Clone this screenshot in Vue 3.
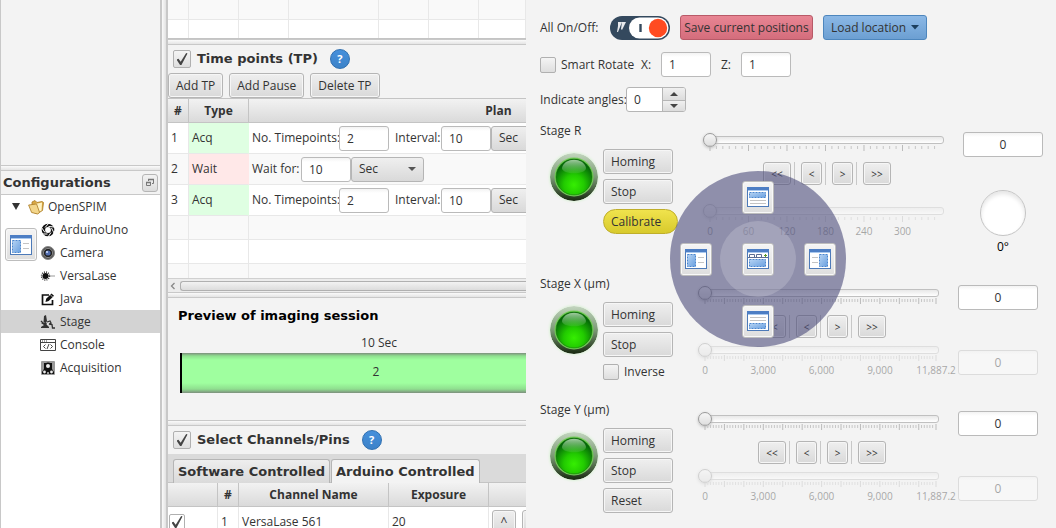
<script setup>
import { ref } from 'vue'

const devices = [
  { name: 'ArduinoUno', icon: 'aperture' },
  { name: 'Camera', icon: 'camera' },
  { name: 'VersaLase', icon: 'laser' },
  { name: 'Java', icon: 'edit' },
  { name: 'Stage', icon: 'stage' },
  { name: 'Console', icon: 'console' },
  { name: 'Acquisition', icon: 'acquisition' },
]
const selected = ref('Stage')

const timePoints = [
  { id: 1, type: 'Acq', count: 2, interval: 10 },
  { id: 2, type: 'Wait', wait: 10 },
  { id: 3, type: 'Acq', count: 2, interval: 10 },
]

const linear = {
  max: 11887.2,
  major: 1000,
  minor: 1000 / 7,
  labels: [[0, '0'], [3000, '3,000'], [6000, '6,000'], [9000, '9,000'], [11887.2, '11,887.2']],
}
const rotary = {
  max: 360,
  major: 60,
  minor: 10,
  labels: [[0, '0'], [60, '60'], [120, '120'], [180, '180'], [240, '240'], [300, '300']],
}
const stages = [
  { id: 'r', title: 'Stage R', third: 'calibrate', scale: rotary, dial: true },
  { id: 'x', title: 'Stage X (µm)', third: 'inverse', scale: linear, dial: false },
  { id: 'y', title: 'Stage Y (µm)', third: 'reset', scale: linear, dial: false },
]
const steps = ['<<', '<', '>', '>>']

function percent(value, scale) {
  return (value / scale.max) * 100 + '%'
}
function ticks(scale) {
  const perMajor = Math.round(scale.major / scale.minor)
  const list = []
  for (let i = 0; i * scale.minor <= scale.max - scale.minor / 2; i++) {
    list.push({ x: percent(i * scale.minor, scale), major: i % perMajor === 0 })
  }
  if (scale.max % scale.major) list.push({ x: '100%', major: true })
  return list
}

const docks = ['top', 'left', 'center', 'right', 'bottom']
const dockArea = {
  top: [3, 5, 16, 5],
  left: [3, 5, 8, 12],
  center: [3, 10, 16, 7],
  right: [11, 5, 8, 12],
  bottom: [3, 12, 16, 5],
}
const dockLines = {
  top: [[3, 13, 16], [3, 16, 16]],
  left: [[13, 8, 6], [13, 13, 6]],
  center: [],
  right: [[3, 8, 6], [3, 13, 6]],
  bottom: [[3, 6, 16], [3, 9, 16]],
}
</script>

<template>
  <div class="app">
    <aside class="sidebar">
      <div class="blank"></div>
      <div class="splitter"></div>
      <header class="side-head">
        <h2>Configurations</h2>
        <button class="float-btn" aria-label="Float panel">
          <svg width="10" height="10" viewBox="0 0 10 10"><path d="M3.500 3V1.500h5v4H7M1.500 4.500h4v3h-4z" fill="none" stroke="#777" /><path d="M3 1.500h6M1 4.500h5" stroke="#777" stroke-width="1.600" /></svg>
        </button>
      </header>
      <ul class="tree">
        <li class="root">
          <svg class="twisty" width="9" height="7" viewBox="0 0 9 7"><path d="M0 0h8L4 7z" fill="#333" /></svg>
          <svg width="16" height="16" viewBox="0 0 16 16">
            <path d="M4 13V3l3-1.500 2 2 5-1 1.500 1-1 8-5 3z" fill="#d9a945" stroke="#a97a22" stroke-width=".8" />
            <path d="M7 5l7-1.500-.5 8L9 14z" fill="#fff3c4" />
            <path d="M.6 6l8-1 3 8.500-2 1.500-6-1.500z" fill="#f3d68b" stroke="#a97a22" stroke-width=".8" />
          </svg>
          <span>OpenSPIM</span>
        </li>
        <li v-for="d in devices" :key="d.name" :class="{ selected: selected === d.name }" @click="selected = d.name">
          <svg v-if="d.icon === 'aperture'" width="16" height="16" viewBox="0 0 16 16">
            <circle cx="8" cy="8" r="4.600" fill="none" stroke="#111" stroke-width="3.400" />
            <path d="M9 1L5 5.500M14.500 5L8.500 4.500M14 11l-2.500-5M8 15l3-4.500M2 12l5.500 0M1.500 5.500L5 10.500" stroke="#fff" stroke-width="1" />
          </svg>
          <svg v-else-if="d.icon === 'camera'" width="16" height="16" viewBox="0 0 16 16">
            <circle cx="8" cy="8" r="6.500" fill="#555" stroke="#888" />
            <circle cx="8" cy="8" r="4.600" fill="#222" stroke="#999" stroke-width=".8" />
            <circle cx="8" cy="8" r="2.600" fill="#536eb0" />
            <circle cx="7" cy="7" r="1" fill="#cfe0ff" />
          </svg>
          <svg v-else-if="d.icon === 'laser'" width="16" height="16" viewBox="0 0 16 16">
            <path d="M8 8h7" stroke="#aaa" stroke-width="1.200" />
            <circle cx="5.500" cy="8" r="3" fill="#111" />
            <circle cx="5.500" cy="8" r="4" fill="none" stroke="#333" stroke-width="1.400" stroke-dasharray="1 1.100" />
          </svg>
          <svg v-else-if="d.icon === 'edit'" width="16" height="16" viewBox="0 0 16 16">
            <path d="M9 4H2.500v9.500h10V9" fill="none" stroke="#111" stroke-width="1.700" />
            <path d="M5.500 11l.7-3.200L11.500 2.500l2.500 2.300-5.300 5.300z" fill="#111" />
            <path d="M10.300 3.700l2.400 2.400" stroke="#fff" stroke-width=".7" />
          </svg>
          <svg v-else-if="d.icon === 'stage'" width="16" height="16" viewBox="0 0 16 16">
            <path d="M4 2l2-1 1 6-1 2-2.500-.5zM1 9h7l-1 2 2 2v1H1v-1l3-2z" fill="#333" />
            <path d="M7 8l3-1 1 2-2 1.500M9 10l3 .5.500 3.500H15M1 7l3 3" fill="none" stroke="#333" stroke-width="1.300" />
            <circle cx="7.500" cy="10" r="1" fill="#eee" />
          </svg>
          <svg v-else-if="d.icon === 'console'" width="16" height="16" viewBox="0 0 16 16">
            <path d="M.5 2.500h15v11H.5zM.5 5.500h15" fill="none" stroke="#444" />
            <path d="M2 4h1M4 4h1M6 4h1" stroke="#444" />
            <path d="M5.500 7.500l-2 2 2 2M10.500 7.500l2 2-2 2M9 7l-2 5" fill="none" stroke="#444" />
          </svg>
          <svg v-else width="16" height="16" viewBox="0 0 16 16">
            <rect x="1" y="1" width="14" height="14" rx="1" fill="#999" />
            <path d="M4 3h8v6l2 3v2H9v-2H7v2H2v-2l2-3z" fill="#111" />
            <circle cx="8" cy="6" r="2.700" fill="#eee" stroke="#111" stroke-width="1.400" />
            <circle cx="4.500" cy="12" r="1.400" fill="#eee" /><circle cx="11.500" cy="12" r="1.400" fill="#eee" />
          </svg>
          <span>{{ d.name }}</span>
        </li>
      </ul>
      <button class="dock-btn side-dock" aria-label="Dock left of window">
        <svg width="22" height="20" viewBox="0 0 22 20">
          <defs>
            <linearGradient id="dk-side" x1="0" y1="0" x2="1" y2="1"><stop offset="0" stop-color="#b5d3f3" /><stop offset="1" stop-color="#6aa0e0" /></linearGradient>
          </defs>
          <rect x=".5" y=".5" width="21" height="19" fill="#fff" stroke="#4d7ab8" />
          <rect x="0" y="0" width="22" height="3" fill="#4d7ec4" /><path d="M1 3.500h20" stroke="#a9c8ee" />
          <rect x="2.500" y="5.500" width="8" height="12" fill="url(#dk-side)" stroke="#4a86cf" stroke-dasharray="2 1" />
          <path d="M13 8.500h6M13 13.500h6" stroke="#c4c4c4" />
        </svg>
      </button>
    </aside>
    <div class="v-splitter"></div>

    <main class="middle">
      <table class="positions">
        <colgroup><col class="c20"><col class="c50"><col class="c50"><col class="c90"><col class="c60"><col class="c50"><col></colgroup>
        <tbody>
          <tr class="alt"><td v-for="n in 7" :key="n"></td></tr>
          <tr><td v-for="n in 7" :key="n"></td></tr>
        </tbody>
      </table>
      <div class="splitter"></div>

      <section class="panel">
        <div class="panel-title">
          <input id="tp" type="checkbox" class="check big" checked>
          <label for="tp">Time points (TP)</label>
          <button class="help" aria-label="Help on time points">?</button>
        </div>
        <div class="toolbar">
          <button class="btn">Add TP</button>
          <button class="btn">Add Pause</button>
          <button class="btn">Delete TP</button>
        </div>
        <div class="clip">
          <table class="grid tp-table">
            <colgroup><col class="c20"><col class="c60"><col class="c500"></colgroup>
            <thead><tr><th>#</th><th>Type</th><th>Plan</th></tr></thead>
            <tbody>
              <tr v-for="(t, i) in timePoints" :key="t.id" :class="{ alt: i % 2 }">
                <td>{{ t.id }}</td>
                <td :class="t.type === 'Acq' ? 'acq' : 'wait'">{{ t.type }}</td>
                <td>
                  <div v-if="t.type === 'Acq'" class="plan">
                    <label class="l-count" :for="'n' + t.id">No. Timepoints:</label>
                    <input :id="'n' + t.id" class="field" :value="t.count">
                    <label class="l-int" :for="'i' + t.id">Interval:</label>
                    <input :id="'i' + t.id" class="field" :value="t.interval">
                    <span class="combo"><select aria-label="Interval unit"><option>Sec</option><option>Min</option></select></span>
                  </div>
                  <div v-else class="plan">
                    <label class="l-wait" :for="'w' + t.id">Wait for:</label>
                    <input :id="'w' + t.id" class="field" :value="t.wait">
                    <span class="combo"><select aria-label="Wait unit"><option>Sec</option><option>Min</option></select></span>
                  </div>
                </td>
              </tr>
              <tr class="empty alt"><td></td><td></td><td></td></tr>
              <tr class="empty"><td></td><td></td><td></td></tr>
              <tr class="last alt"><td></td><td></td><td></td></tr>
            </tbody>
          </table>
        </div>
        <div class="scrollbar">
          <svg width="6" height="8" viewBox="0 0 6 8"><path d="M4.500 1L1.500 4l3 3" fill="none" stroke="#888" stroke-width="1.300" /></svg>
          <div class="scroll-thumb"></div>
        </div>
      </section>
      <div class="splitter"></div>

      <section class="panel preview">
        <h3>Preview of imaging session</h3>
        <div class="timeline">
          <div class="time">10 Sec</div>
          <div class="segment">2</div>
        </div>
      </section>
      <div class="splitter"></div>

      <section class="panel channels">
        <div class="panel-title">
          <input id="ch" type="checkbox" class="check big" checked>
          <label for="ch">Select Channels/Pins</label>
          <button class="help" aria-label="Help on channels">?</button>
        </div>
        <div class="tabs" role="tablist">
          <button role="tab" aria-selected="false">Software Controlled</button>
          <button role="tab" aria-selected="true" class="on">Arduino Controlled</button>
        </div>
        <div class="clip">
          <table class="grid ch-table">
            <colgroup><col class="c50"><col class="c20"><col class="c150"><col class="c100"><col class="c100"></colgroup>
            <thead><tr><th></th><th>#</th><th>Channel Name</th><th>Exposure</th><th></th></tr></thead>
            <tbody>
              <tr>
                <td class="tick-cell"><input type="checkbox" class="check" checked aria-label="Use VersaLase 561"></td>
                <td>1</td>
                <td>VersaLase 561</td>
                <td>20</td>
                <td><div class="movers"><button class="btn small">^</button><button class="btn small">v</button></div></td>
              </tr>
            </tbody>
          </table>
        </div>
      </section>
    </main>

    <section class="control">
      <div class="line top-line">
        <span class="all-label">All On/Off:</span>
        <button class="toggle" role="switch" aria-checked="true" aria-label="All On/Off">
          <svg width="60" height="24" viewBox="0 0 60 24">
            <rect width="60" height="24" rx="12" fill="#34495e" />
            <rect x="19" y="1.500" width="39.500" height="21" rx="10.500" fill="#fff" />
            <path d="M8 6l4 0-4 10-1 0 1-6zM12 6h4l-4 8-1-1z" fill="#e8eaed" />
            <path d="M30.500 8v8" stroke="#34495e" stroke-width="2.400" />
            <circle cx="48" cy="12" r="9.200" fill="#ff4b22" />
          </svg>
        </button>
        <button class="btn save">Save current positions</button>
        <button class="btn load">Load location<svg width="8" height="5" viewBox="0 0 8 5"><path d="M0 0h8L4 4.500z" fill="#1c3f5e" /></svg></button>
      </div>
      <div class="line smart-line">
        <span class="rotate"><input id="sr" type="checkbox" class="check"><label for="sr">Smart Rotate</label></span>
        <label class="axis" for="ax">X:</label><input id="ax" class="field" value="1">
        <label class="axis" for="az">Z:</label><input id="az" class="field" value="1">
      </div>
      <div class="line angle-line">
        <label class="l-angle" for="ang">Indicate angles:</label>
        <span class="spinner">
          <input id="ang" value="0">
          <span class="arrows">
            <button aria-label="Increase"><svg width="8" height="4" viewBox="0 0 8 4"><path d="M0 4h8L4 0z" fill="#444" /></svg></button>
            <button aria-label="Decrease"><svg width="8" height="4" viewBox="0 0 8 4"><path d="M0 0h8L4 4z" fill="#444" /></svg></button>
          </span>
        </span>
      </div>

      <div class="stages">
        <section v-for="s in stages" :key="s.id" class="stage">
          <div class="stage-left">
            <h4>{{ s.title }}</h4>
            <div class="power">
              <svg class="led" width="48" height="48" viewBox="0 0 48 48">
                <defs>
                  <linearGradient :id="'ring-' + s.id" x1="0" y1="0" x2="0" y2="1"><stop offset="0" stop-color="#c3d6bf" /><stop offset=".5" stop-color="#7b9a75" /><stop offset="1" stop-color="#17280f" /></linearGradient>
                  <radialGradient :id="'core-' + s.id" cx=".5" cy=".72" r=".62"><stop offset="0" stop-color="#36ee02" /><stop offset=".45" stop-color="#22cb00" /><stop offset="1" stop-color="#046808" /></radialGradient>
                  <linearGradient :id="'shine-' + s.id" x1="0" y1="0" x2="0" y2="1"><stop offset="0" stop-color="#d5edd3" stop-opacity=".75" /><stop offset="1" stop-color="#8fd48b" stop-opacity=".15" /></linearGradient>
                </defs>
                <circle cx="24" cy="24" r="24" :fill="`url(#ring-${s.id})`" />
                <circle cx="24" cy="24" r="19.500" fill="#74ce59" />
                <circle cx="24" cy="24" r="18" :fill="`url(#core-${s.id})`" stroke="#137009" stroke-width=".6" />
                <path d="M12 15c2-11 22-11 24 0 0 7-24 7-24 0z" :fill="`url(#shine-${s.id})`" />
              </svg>
              <div class="actions">
                <button class="btn">Homing</button>
                <button class="btn">Stop</button>
                <button v-if="s.third === 'calibrate'" class="btn calibrate">Calibrate</button>
                <button v-else-if="s.third === 'reset'" class="btn">Reset</button>
                <span v-else class="inverse"><input id="inv" type="checkbox" class="check"><label for="inv">Inverse</label></span>
              </div>
            </div>
          </div>

          <div class="travel" :class="{ tall: s.dial }">
            <div class="slider">
              <input type="range" min="0" :max="s.scale.max" value="0" :aria-label="s.title + ' target'">
            </div>
            <svg class="ticks" width="100%" height="8">
              <line v-for="(t, i) in ticks(s.scale)" :key="i" :x1="t.x" :x2="t.x" :y1="t.major ? 0 : 1" :y2="t.major ? 6 : 4" :class="{ major: t.major }" />
            </svg>
            <div class="nav">
              <template v-for="(k, i) in steps" :key="k">
                <i v-if="i" class="sep"></i>
                <button class="btn step" :class="{ wide: k.length > 1 }">{{ k }}</button>
              </template>
            </div>
            <div class="readout">
              <div class="slider">
                <input type="range" min="0" :max="s.scale.max" value="0" disabled :aria-label="s.title + ' position'">
              </div>
              <svg class="ticks labelled" width="100%" height="26">
                <line v-for="(t, i) in ticks(s.scale)" :key="i" :x1="t.x" :x2="t.x" :y1="t.major ? 0 : 1" :y2="t.major ? 6 : 4" :class="{ major: t.major }" />
                <text v-for="l in s.scale.labels" :key="l[1]" :x="percent(l[0], s.scale)" y="19">{{ l[1] }}</text>
              </svg>
            </div>
          </div>

          <div class="values">
            <input class="field value" value="0" :aria-label="s.title + ' target value'">
            <div v-if="s.dial" class="dial-box"><span class="dial"></span><span class="deg">0°</span></div>
            <input v-else class="field value second" value="0" disabled :aria-label="s.title + ' position value'">
          </div>
        </section>
      </div>

      <div class="radial">
        <div class="hub"></div>
        <button v-for="d in docks" :key="d" class="dock-btn" :class="'d-' + d" :aria-label="'Dock ' + d">
          <svg width="22" height="20" viewBox="0 0 22 20">
            <defs>
              <linearGradient :id="'dk-' + d" x1="0" y1="0" x2="1" y2="1"><stop offset="0" stop-color="#b5d3f3" /><stop offset="1" stop-color="#6aa0e0" /></linearGradient>
            </defs>
            <rect x=".5" y=".5" width="21" height="19" fill="#fff" stroke="#4d7ab8" />
            <rect x="0" y="0" width="22" height="3" fill="#4d7ec4" /><path d="M1 3.500h20" stroke="#a9c8ee" />
            <g v-if="d === 'center'">
              <path d="M1 8.500h20M2.500 8V5.500h5V8M9.500 8V5.500h5V8" fill="none" stroke="#5a6d92" />
              <path d="M17 6.500h3M18.500 5v3" stroke="#5a9a2c" />
            </g>
            <rect :x="dockArea[d][0] - .5" :y="dockArea[d][1] + .5" :width="dockArea[d][2]" :height="dockArea[d][3]" :fill="`url(#dk-${d})`" stroke="#4a86cf" stroke-dasharray="2 1" />
            <path v-for="(l, i) in dockLines[d]" :key="i" :d="`M${l[0]} ${l[1] + .5}h${l[2]}`" stroke="#c4c4c4" />
          </svg>
        </button>
      </div>
    </section>
  </div>
</template>

<style>
html, body { margin: 0; background: #f3f3f3; overflow: hidden; }
</style>

<style scoped>
* { box-sizing: border-box; }
.app {
  display: grid;
  grid-template-columns: 162px 6px minmax(0, 358fr) minmax(0, 530fr);
  height: 100vh;
  overflow: hidden;
  background: #f3f3f3;
  color: #333;
  font: 12px/16px "Open Sans", "Noto Sans", sans-serif;
}
button, input, select { font: inherit; color: inherit; margin: 0; }
h2, h3, h4 { margin: 0; }
svg { display: block; flex: none; }

/* sidebar */
.sidebar { position: relative; display: flex; flex-direction: column; border: solid #c8c8c8; border-width: 0 2px 0 1px; }
.blank { flex: 0 0 165px; }
.splitter { flex: none; height: 6px; border: solid #c8c8c8; border-width: 1px 0; background: linear-gradient(#fafafa, #e4e4e4); }
.side-head { display: flex; align-items: center; justify-content: space-between; height: 24px; padding: 0 2px 0 2px; border-bottom: 1px solid #c8c8c8; }
h2, h3, .panel-title label, .tabs button { font: bold 13px/16px "DejaVu Sans", Verdana, sans-serif; }
.float-btn { display: grid; place-items: center; width: 16px; height: 18px; padding: 0; border: 1px solid #b5b5b5; border-radius: 3px; background: linear-gradient(#f2f2f2, #dcdcdc); }
.tree { flex: 1; margin: 0; padding: 0; list-style: none; background: #fff; }
.tree li { display: flex; align-items: center; gap: 4px; height: 23px; padding-left: 39px; }
.tree .root { padding-left: 11px; }
.twisty { margin-right: 3px; }
.tree .selected { background: #d3d3d3; }
.v-splitter { border-right: 2px solid #c8c8c8; background: linear-gradient(90deg, #fafafa, #e2e2e2); }

/* shared controls */
.btn { height: 25px; padding: 0 7px; border: 1px solid #b5b5b5; border-radius: 3px; background: linear-gradient(#efefef, #d9d9d9); box-shadow: inset 0 0 0 1px #f6f6f6; white-space: nowrap; text-align: left; }
.field { width: 50px; height: 25px; padding: 0 7px; border: 1px solid #bababa; border-radius: 3px; background: linear-gradient(#f3f3f3, #fff 4px); }
.check { appearance: none; flex: none; display: grid; place-items: center; width: 16px; height: 16px; border: 1px solid #b0b0b0; border-radius: 2px; background: linear-gradient(#f4f4f4, #dedede); }
.check.big { width: 18px; height: 18px; }
.check:checked::before { content: ""; width: 11px; height: 12px; background: #444; clip-path: polygon(0 55%, 18% 48%, 38% 72%, 88% 0, 100% 4%, 45% 100%, 32% 100%); }

/* middle */
.middle { display: flex; flex-direction: column; min-width: 0; overflow: hidden; }
table { border-collapse: separate; border-spacing: 0; table-layout: fixed; background: #fff; }
td { padding: 0; border: solid #e8e8e8; border-width: 0 1px 1px 0; }
.alt td { background: #f9f9f9; }
.c20 { width: 21px; } .c50 { width: 50px; } .c60 { width: 60px; } .c90 { width: 90px; }
.c100 { width: 100px; } .c150 { width: 150px; } .c500 { width: 500px; }
.positions { flex: none; width: 100%; border-bottom: 1px solid #c4c4c4; }
.positions .c60 { width: 50px; }
.positions td { height: 20px; }
.positions tr:last-child td { height: 18px; border-bottom: 0; }
.panel { flex: none; }
.panel-title { display: flex; align-items: center; height: 28px; padding-left: 5px; gap: 6px; }
.help { width: 20px; height: 20px; margin-left: 6px; padding: 0; border: 1px solid #2f6fb0; border-radius: 50%; background: linear-gradient(#4690dc, #3c82c8); color: #fff; font: bold 11px/16px "Open Sans", sans-serif; text-align: center; }
.toolbar { display: flex; gap: 6px; }
.clip { overflow: hidden; }
.tp-table { width: 581px; }
.ch-table { width: 420px; }
.grid th { height: 25px; padding: 0; border: solid #c4c4c4; border-width: 1px 1px 1px 0; background: linear-gradient(#f2f2f2, #dadada); font-weight: bold; }
.grid td { height: 31px; padding: 0 3px; }
.grid .empty td { height: 24px; }
.grid .last td { height: 14px; border-bottom: 0; }
.grid .acq { background: #dfffe2; border-right-color: #dfffe2; }
.grid .wait { background: #ffe8e8; border-right-color: #ffe8e8; }
.plan { display: flex; align-items: center; height: 25px; }
.plan label { white-space: nowrap; }
.l-count { width: 87px; } .l-int { width: 46px; margin-left: 6px; } .l-wait { width: 49px; }
.combo { display: grid; align-items: center; width: 73px; }
.combo select { grid-area: 1 / 1; appearance: none; width: 100%; height: 25px; padding: 0 7px; border: 1px solid #b5b5b5; border-radius: 3px; background: linear-gradient(#efefef, #d9d9d9); }
.combo::after { content: ""; grid-area: 1 / 1; justify-self: end; width: 8px; height: 4px; margin-right: 8px; background: #555; clip-path: polygon(0 0, 100% 0, 50% 100%); pointer-events: none; }
.scrollbar { display: flex; align-items: center; height: 14px; padding-left: 2px; gap: 4px; border-top: 1px solid #d0d0d0; background: #ececec; overflow: hidden; }
.scroll-thumb { flex: 1; height: 10px; border: solid #b0b0b0; border-width: 1px 0 1px 1px; border-radius: 3px 0 0 3px; background: linear-gradient(#f2f2f2, #dcdcdc); }
.preview { display: flex; flex-direction: column; gap: 11px; height: 122px; padding: 10px 0 0 10px; overflow: hidden; }
.preview h3 { color: #000; }
.timeline { width: 392px; padding-left: 2px; text-align: center; }
.time { padding: 0 0 2px 8px; }
.segment { height: 40px; border-left: 2px solid #000; background: linear-gradient(#7d8f7d 0, #8fdf8f 3px, #9fff9f 7px, #9fff9f 30px, #8fdf8f 36px, #7d8f7d 40px); line-height: 37px; }
.tabs { display: flex; gap: 1px; height: 28px; padding: 5px 5px 0; background: #dadada; }
.tabs button { height: 24px; padding: 0 4px; border: 1px solid #b5b5b5; border-bottom: 0; border-radius: 3px 3px 0 0; background: linear-gradient(#eee, #dadada); white-space: nowrap; }
.tabs .on { background: #f3f3f3; }
.tick-cell .check { margin-left: -2px; background: #fff; }
.movers { display: flex; gap: 6px; }
.small { width: 24px; padding: 0; text-align: center; }

/* control panel */
.control { position: relative; min-width: 0; padding: 15px 13px 0 14px; white-space: nowrap; }
.line { display: flex; align-items: center; height: 25px; margin-bottom: 12px; }
.smart-line { margin-bottom: 10px; }
.angle-line { margin-bottom: 11px; }
.all-label { width: 70px; }
.toggle { padding: 0; border: 0; background: none; margin-right: 10px; }
.save { width: 133px; padding: 0; border-color: #b85a68; background: linear-gradient(#e88593, #d46d7c); box-shadow: none; text-align: center; }
.load { display: flex; align-items: center; justify-content: space-between; width: 104px; margin-left: 10px; padding: 0 7px; border-color: #4d86bd; background: linear-gradient(#8bb8e6, #6c9fd2); box-shadow: none; }
.rotate { display: flex; align-items: center; gap: 5px; width: 91px; }
.axis { width: 30px; padding-left: 10px; }
.l-angle { width: 86px; }
.spinner { display: flex; width: 60px; height: 25px; border: 1px solid #b5b5b5; border-radius: 3px; overflow: hidden; background: #fff; }
.spinner input { width: 35px; padding: 0 7px; border: 0; background: none; }
.arrows { flex: 1; display: grid; grid-template-rows: 1fr 1fr; border-left: 1px solid #b5b5b5; }
.arrows button { display: grid; place-items: center; padding: 0; border: 0; background: linear-gradient(#f0f0f0, #dcdcdc); }
.arrows button + button { border-top: 1px solid #b5b5b5; }

.stages { display: flex; flex-direction: column; gap: 21px; }
.stage { display: flex; align-items: flex-start; }
h4 { font: inherit; }
.stage-left { display: flex; flex-direction: column; gap: 10px; flex: none; }
.power { display: flex; align-items: flex-start; gap: 5px; padding-left: 10px; }
.led { margin-top: 4px; border-radius: 50%; box-shadow: 0 0 3px #c9f2c0; }
.actions { display: flex; flex-direction: column; gap: 5px; }
.actions .btn { width: 70px; padding: 0 7px; }
.actions .calibrate { width: 75px; border-color: #bfae2a; border-radius: 13px; background: linear-gradient(#f0e34d, #d8ca2c); box-shadow: none; }
.inverse { display: flex; align-items: center; gap: 5px; height: 19px; }

.travel { flex: 0 1 245px; min-width: 0; margin-left: 25px; padding-top: 10px; }
.slider { display: grid; align-items: center; height: 14px; }
.slider::before { content: ""; grid-area: 1 / 1; height: 6px; margin: 0 4px; border: 1px solid #c0c0c0; border-radius: 3px; background: linear-gradient(#e8e8e8, #fff); }
.slider input { grid-area: 1 / 1; appearance: none; width: 100%; height: 14px; background: none; }
.slider input::-webkit-slider-thumb { appearance: none; width: 14px; height: 14px; border: 1px solid #999; border-radius: 50%; background: linear-gradient(#f6f6f6, #dedede); box-shadow: 0 1px 3px #bbb; }
.ticks { width: calc(100% - 14px); margin: -2px 7px 0; overflow: visible; }
.ticks line { stroke: #c6c6c6; stroke-width: 1; }
.ticks .major { stroke: #bbb; }
.ticks text { fill: #333; font-size: 10px; text-anchor: middle; }
.nav { display: flex; justify-content: center; margin-top: 9px; padding-left: 3px; }
.step { width: 21px; height: 23px; padding: 0; font-size: 10px; text-align: center; }
.step.wide { width: 28px; }
.sep { width: 1px; margin: 0 6px 0 3px; background: #c8c8c8; }
.readout { margin-top: 5px; opacity: .4; }
.tall .readout { margin-top: 19px; }
.values { display: flex; flex-direction: column; flex: none; margin-left: 15px; padding-top: 9px; }
.value { width: 80px; text-align: center; }
.second { margin-top: 40px; opacity: .4; }
.dial-box { display: flex; flex-direction: column; align-items: center; gap: 3px; margin-top: 33px; color: #000; }
.dial { width: 46px; height: 46px; border: 1px solid #c4c4c4; border-radius: 50%; background: #fff; box-shadow: inset 0 3px 4px #e6e6e6; }

/* docking overlay */
.dock-btn { display: grid; place-items: center; width: 32px; height: 33px; padding: 0; border: 1px solid #bdbdbd; border-radius: 3px; background: linear-gradient(#f4f4f4, #dedede); box-shadow: inset 0 0 0 1px #f8f8f8; }
.side-dock { position: absolute; left: 4px; top: 228px; }
.radial {
  position: absolute; left: 144px; top: 171px;
  display: grid; grid-template: repeat(3, 33px) / repeat(3, 32px); gap: 29px 30px; place-content: center;
  width: 176px; height: 176px; border-radius: 50%; background: rgba(77, 76, 123, .6);
}
.hub { grid-area: 2 / 2; place-self: center; width: 76px; height: 76px; margin: -22px; border-radius: 50%; background: rgba(255, 255, 255, .18); }
.d-top { grid-area: 1 / 2; } .d-left { grid-area: 2 / 1; } .d-center { grid-area: 2 / 2; z-index: 1; }
.d-right { grid-area: 2 / 3; } .d-bottom { grid-area: 3 / 2; }
</style>
